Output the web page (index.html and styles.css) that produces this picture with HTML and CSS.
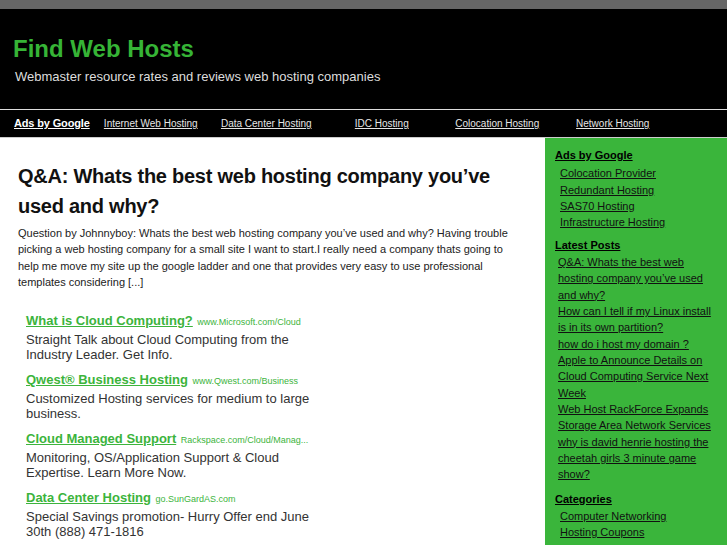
FILE: index.html
```html
<!DOCTYPE html>
<html>
<head>
<meta charset="utf-8">
<title>Find Web Hosts</title>
<link rel="stylesheet" href="styles.css">
</head>
<body>
<div class="topbar"></div>
<header class="header">
  <h1 class="site-title">Find Web Hosts</h1>
  <p class="tagline">Webmaster resource rates and reviews web hosting companies</p>
</header>
<nav class="nav">
  <a class="nav-ads" href="#">Ads by Google</a>
  <a class="nav-link" href="#">Internet Web Hosting</a>
  <a class="nav-link" href="#">Data Center Hosting</a>
  <a class="nav-link" href="#">IDC Hosting</a>
  <a class="nav-link" href="#">Colocation Hosting</a>
  <a class="nav-link" href="#">Network Hosting</a>
</nav>
<div class="page">
  <main class="main">
    <h2 class="post-title">Q&amp;A: Whats the best web hosting company you’ve used and why?</h2>
    <p class="post-excerpt">Question by Johnnyboy: Whats the best web hosting company you’ve used and why? Having trouble picking a web hosting company for a small site I want to start.I really need a company thats going to help me move my site up the google ladder and one that provides very easy to use professional templates considering [...]</p>
    <div class="ads">
      <div class="ad">
        <div class="ad-head"><a class="ad-title" href="#">What is Cloud Computing?</a> <span class="ad-url">www.Microsoft.com/Cloud</span></div>
        <div class="ad-text">Straight Talk about Cloud Computing from the Industry Leader. Get Info.</div>
      </div>
      <div class="ad">
        <div class="ad-head"><a class="ad-title" href="#">Qwest® Business Hosting</a> <span class="ad-url">www.Qwest.com/Business</span></div>
        <div class="ad-text">Customized Hosting services for medium to large business.</div>
      </div>
      <div class="ad">
        <div class="ad-head"><a class="ad-title" href="#">Cloud Managed Support</a> <span class="ad-url">Rackspace.com/Cloud/Manag...</span></div>
        <div class="ad-text">Monitoring, OS/Application Support &amp; Cloud Expertise. Learn More Now.</div>
      </div>
      <div class="ad">
        <div class="ad-head"><a class="ad-title" href="#">Data Center Hosting</a> <span class="ad-url">go.SunGardAS.com</span></div>
        <div class="ad-text">Special Savings promotion- Hurry Offer end June 30th (888) 471-1816</div>
      </div>
    </div>
  </main>
  <aside class="sidebar">
    <h3 class="side-head">Ads by Google</h3>
    <ul class="side-list side-ads">
      <li><a href="#">Colocation Provider</a></li>
      <li><a href="#">Redundant Hosting</a></li>
      <li><a href="#">SAS70 Hosting</a></li>
      <li><a href="#">Infrastructure Hosting</a></li>
    </ul>
    <h3 class="side-head">Latest Posts</h3>
    <ul class="side-list side-posts">
      <li><a href="#">Q&amp;A: Whats the best web hosting company you’ve used and why?</a></li>
      <li><a href="#">How can I tell if my Linux install is in its own partition?</a></li>
      <li><a href="#">how do i host my domain ?</a></li>
      <li><a href="#">Apple to Announce Details on Cloud Computing Service Next Week</a></li>
      <li><a href="#">Web Host RackForce Expands Storage Area Network Services</a></li>
      <li><a href="#">why is david henrie hosting the cheetah girls 3 minute game show?</a></li>
    </ul>
    <h3 class="side-head">Categories</h3>
    <ul class="side-list side-cats">
      <li><a href="#">Computer Networking</a></li>
      <li><a href="#">Hosting Coupons</a></li>
    </ul>
  </aside>
</div>
</body>
</html>
```
FILE: styles.css
```css
html, body {
  margin: 0;
  padding: 0;
  background: #fff;
  font-family: "Liberation Sans", Arial, sans-serif;
}
.topbar {
  height: 9px;
  background: #666;
}
.header {
  background: #000;
  height: 100px;
  box-sizing: border-box;
  padding: 26px 0 0 13px;
}
.site-title {
  margin: 0;
  font-size: 24px;
  line-height: 28px;
  font-weight: bold;
  color: #36b436;
}
.tagline {
  margin: 6px 0 0 2px;
  font-size: 13px;
  line-height: 16px;
  color: #ddd;
}
.nav {
  background: #000;
  border-top: 1px solid #ddd;
  border-bottom: 1px solid #ccc;
  height: 27px;
  display: grid;
  grid-template-columns: 79px repeat(5, 115.5px);
  padding-left: 14px;
  line-height: 27px;
}
.nav-ads {
  color: #fff;
  font-size: 11px;
  font-weight: bold;
  letter-spacing: -0.15px;
}
.nav-link {
  color: #e6e6e6;
  font-size: 10px;
  text-align: center;
}
.page {
  display: flex;
  align-items: flex-start;
}
.main {
  width: 545px;
  box-sizing: border-box;
  padding: 23px 25px 0 18px;
}
.post-title {
  margin: 0;
  font-size: 20px;
  line-height: 30px;
  font-weight: bold;
  letter-spacing: -0.25px;
  color: #111;
}
.post-excerpt {
  margin: 4px 0 0 0;
  font-size: 11px;
  line-height: 16.3px;
  color: #222;
}
.ads {
  margin-top: 20px;
  padding-left: 8px;
  width: 300px;
}
.ad {
  margin-bottom: 7px;
}
.ad-head {
  line-height: 20px;
  white-space: nowrap;
}
.ad-title {
  color: #3cb43c;
  font-size: 13px;
  font-weight: bold;
  text-decoration: underline;
}
.ad-url {
  color: #3cb43c;
  font-size: 9px;
}
.ad-text {
  color: #333;
  font-size: 13px;
  line-height: 15px;
}
.sidebar {
  flex: 1;
  background: #3ab53b;
  padding: 9px 10px 20px 10px;
  min-height: 420px;
  font-size: 11px;
  line-height: 16.33px;
}
.side-head {
  margin: 0 0 1px 0;
  font-size: 11px;
  line-height: 16.33px;
  font-weight: bold;
  color: #000;
  text-decoration: underline;
}
.side-list {
  list-style: none;
  margin: 0 0 6px 0;
  padding: 0 0 0 5px;
}
.side-ads {
  margin-top: 2px;
}
.side-posts {
  padding-left: 3px;
  margin-bottom: 8px;
}
.side-list a {
  color: #111;
  text-decoration: underline;
}
```
